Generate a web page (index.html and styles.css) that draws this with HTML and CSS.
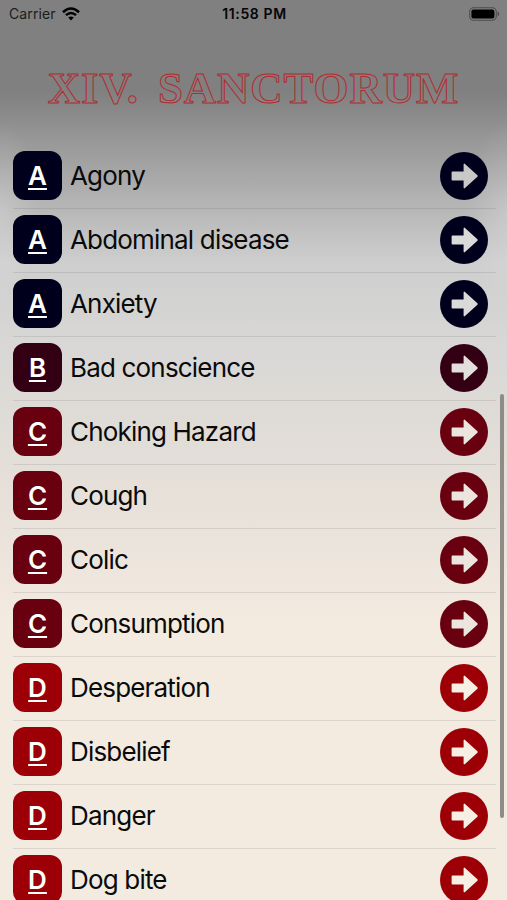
FILE: index.html
```html
<!DOCTYPE html>
<html lang="en">
<head>
    <meta charset="UTF-8">
    <meta name="viewport" content="width=device-width, initial-scale=1.0">
    <title>XIV. Sanctorum</title>
    <link rel="stylesheet" href="styles.css">
</head>
<body>
    <header class="status-bar">
        <div class="status-left">
            <span class="carrier">Carrier</span>
            <svg class="wifi" viewBox="0 0 18 14" width="18" height="14">
                <path d="M1 5.2 Q9 -2.2 17 5.2" fill="none" stroke="#000" stroke-width="2.6"/>
                <path d="M3.9 8.2 Q9 3.6 14.1 8.2" fill="none" stroke="#000" stroke-width="2.4"/>
                <path d="M6.2 10.6 Q9 8.2 11.8 10.6 L9 13.6 Z"/>
            </svg>
        </div>
        <div class="time">11:58 PM</div>
        <div class="status-right">
            <svg class="battery" viewBox="0 0 31 14" width="31" height="14">
                <rect x="0.7" y="0.7" width="26.6" height="12.6" rx="4" fill="none" stroke="#4c4c4c" stroke-width="1.1"/>
                <rect x="2.4" y="2.4" width="23" height="9.2" rx="2"/>
                <path d="M28.6 4.8 Q30.4 5.4 30.4 7 Q30.4 8.6 28.6 9.2 Z" fill="#4c4c4c"/>
            </svg>
        </div>
    </header>
    <h1 class="title">XIV. SANCTORUM</h1>
    <ul id="list" class="list"></ul>
    <div class="scrollbar"></div>
    <script>
        const items = [
            'Agony', 'Abdominal disease', 'Anxiety', 'Bad conscience',
            'Choking Hazard', 'Cough', 'Colic', 'Consumption',
            'Desperation', 'Disbelief', 'Danger', 'Dog bite'
        ];
        const list = document.getElementById('list');

        items.forEach((name) => {
            const letter = name[0];
            const row = document.createElement('li');
            row.className = 'row letter-' + letter.toLowerCase();
            row.innerHTML = `
                <span class="badge"><span class="initial">${letter}</span></span>
                <span class="name">${name}</span>
                <svg class="arrow" viewBox="0 0 48 48" width="48" height="48">
                    <circle cx="24" cy="24" r="24" fill="currentColor"/>
                    <path class="arrow-shape" d="M12.6 19.5H23.6V12.6Q23.8 11 25 12L37.4 23.2Q38 24 37.4 24.8L25 36Q23.8 37 23.6 35.4V28.5H12.6Q11.6 28.5 11.6 27.5V20.5Q11.6 19.5 12.6 19.5Z"/>
                </svg>`;
            list.appendChild(row);
        });
    </script>
</body>
</html>
```

FILE: styles.css
```css
* {
    box-sizing: border-box;
}
body {
    margin: 0;
    height: 900px;
    overflow: hidden;
    display: flex;
    flex-direction: column;
    color: #050505;
    font-family: Inter, "Liberation Sans", sans-serif;
    background:
        radial-gradient(ellipse 40px 90px at 0 210px, rgba(255, 255, 255, 0.2), transparent),
        radial-gradient(ellipse 40px 90px at 100% 210px, rgba(255, 255, 255, 0.2), transparent),
        linear-gradient(
            #808080 0, #808080 92px, #979797 140px, #b3b3b3 200px,
            #cecece 262px, #d8d7d6 340px, #e0dcd7 430px,
            #e9e2da 520px, #f3eae0 620px, #f3eae0 900px
        );
}
.status-bar {
    display: flex;
    align-items: center;
    height: 27px;
    padding: 0 7px 0 9px;
    flex-shrink: 0;
    font-size: 14px;
}
.status-left, .status-right {
    flex: 1;
    display: flex;
    align-items: center;
}
.status-left {
    gap: 6px;
}
.status-right {
    justify-content: flex-end;
}
.carrier {
    color: #1c1c1c;
    letter-spacing: 0.1px;
}
.time {
    font-weight: 600;
    letter-spacing: 0.6px;
}
.title {
    margin: 34px 0 0;
    height: 83px;
    flex-shrink: 0;
    text-align: center;
    font-family: "Liberation Serif", serif;
    font-size: 45px;
    line-height: 54px;
    letter-spacing: 0.8px;
    word-spacing: 7px;
    white-space: nowrap;
    color: transparent;
    -webkit-text-stroke: 1px #b02c31;
}
.list {
    margin: 0;
    padding: 0;
    list-style: none;
}
.row {
    display: flex;
    align-items: center;
    height: 64px;
    margin: 0 11px 0 13px;
    padding: 0 8px 1px 0;
    box-shadow: 0 1px 0 rgba(60, 60, 67, 0.13);
}
.badge {
    display: flex;
    align-items: center;
    justify-content: center;
    width: 49px;
    height: 49px;
    border-radius: 12px;
    background: currentColor;
}
.initial {
    color: #fff;
    font-size: 26px;
    font-weight: 600;
    text-decoration: underline;
    text-decoration-thickness: 2px;
    text-underline-offset: 3px;
}
.name {
    flex: 1;
    margin-left: 8px;
    color: #0a0a0a;
    font-size: 26px;
    letter-spacing: -0.82px;
}
.letter-a {
    color: #00001c;
}
.letter-a .arrow-shape {
    fill: #dadada;
}
.letter-a:first-child .arrow-shape {
    fill: #c8c8c8;
}
.letter-b {
    color: #330013;
}
.letter-b .arrow-shape {
    fill: #e3dfdc;
}
.letter-c {
    color: #68000f;
}
.letter-c .arrow-shape {
    fill: #ece5dd;
}
.letter-d {
    color: #9c0006;
}
.letter-d .arrow-shape {
    fill: #f7eee4;
}
.scrollbar {
    position: absolute;
    top: 394px;
    right: 3px;
    width: 4px;
    height: 424px;
    border-radius: 2px;
    background: #8f8b87;
}
```
